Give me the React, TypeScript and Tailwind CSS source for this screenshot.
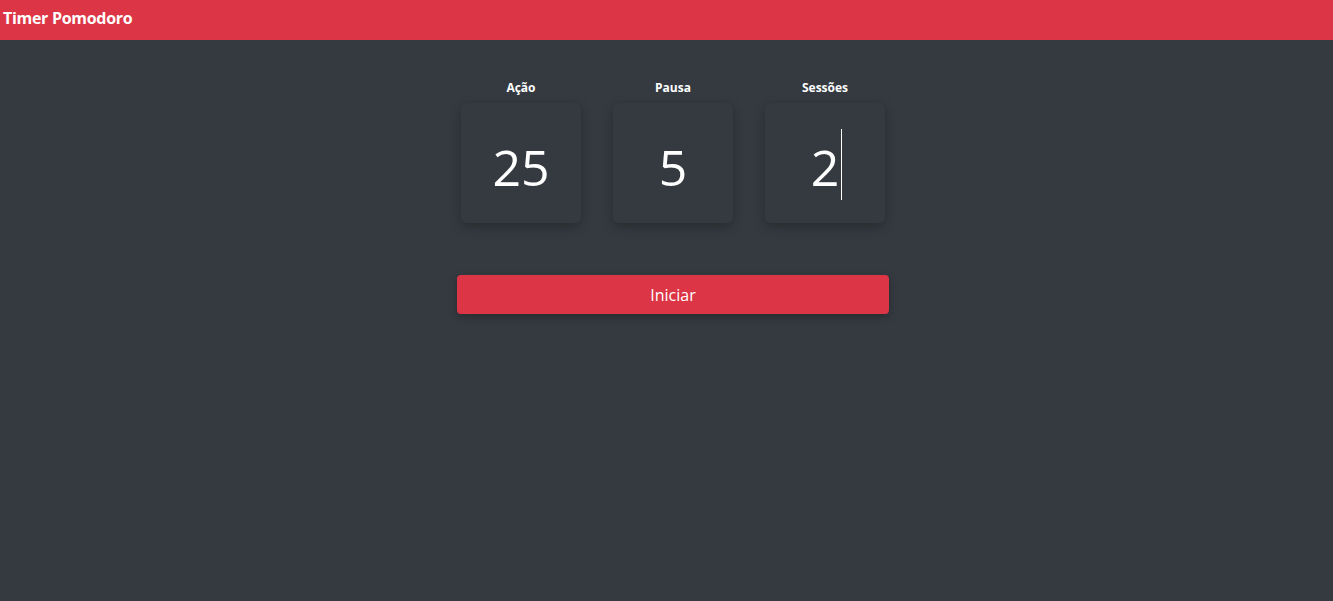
const fields = [
  { label: "Ação", value: "25" },
  { label: "Pausa", value: "5" },
  { label: "Sessões", value: "2", focused: true },
];

export default function App() {
  return (
    <div className="min-h-screen bg-[#343a40] font-['Open_Sans','Noto_Sans',sans-serif] text-white">
      <header className="h-10 bg-[#dc3545] flex items-center px-[3px]">
        <h1 className="text-[16px] font-bold tracking-[-0.3px] -mt-[4px]">Timer Pomodoro</h1>
      </header>

      <main className="flex flex-col items-center pl-[13px] pt-[38px]">
        <div className="flex gap-8">
          {fields.map((f) => (
            <div key={f.label} className="flex flex-col items-center">
              <span className="text-[12px] font-bold leading-5 mb-[5px]">{f.label}</span>
              <div className="w-[120px] h-[120px] rounded-md bg-[#343a40] shadow-[0_4px_12px_rgba(0,0,0,0.25)] flex items-center justify-center pt-[8px]">
                <span className="relative text-[50px] font-normal leading-none">
                  {f.value}
                  {f.focused && (
                    <span className="absolute right-[-3px] top-[-13px] h-[71px] w-px bg-white" />
                  )}
                </span>
              </div>
            </div>
          ))}
        </div>

        <button className="mt-[52px] w-[432px] h-[39px] rounded bg-[#dc3545] text-[16px] shadow-[0_3px_8px_rgba(0,0,0,0.25)]">
          Iniciar
        </button>
      </main>
    </div>
  );
}
